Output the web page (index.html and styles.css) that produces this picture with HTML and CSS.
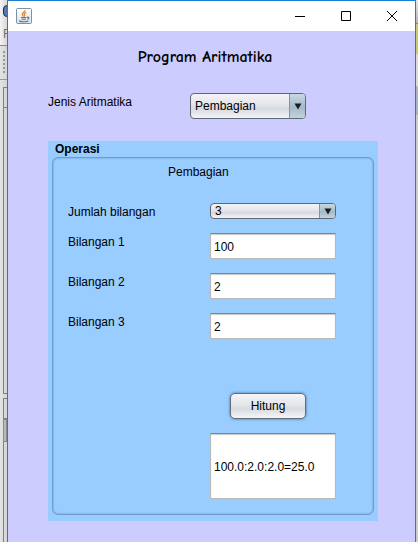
FILE: index.html
```html
<!DOCTYPE html>
<html lang="id">
<head>
<meta charset="utf-8">
<meta name="viewport" content="width=device-width, initial-scale=1">
<title>Program Aritmatika</title>
<link rel="stylesheet" href="styles.css">
</head>
<body>
<div class="desktop">
  <div class="behind behind-left" aria-hidden="true">
    <div class="strip-icon"><span class="ball"></span><span>F</span></div>
    <div class="strip-grip"><i></i><i></i><i></i><i></i><i></i><i></i></div>
    <div class="strip-head"></div>
    <div class="strip-body"></div>
    <div class="strip-head strip-second"></div>
    <div class="strip-thumb"></div>
    <div class="strip-rest"></div>
  </div>

  <div class="window">
    <header class="titlebar">
      <svg class="java" viewBox="0 0 16 16" width="16" height="16" aria-hidden="true">
        <defs><linearGradient id="tile" x1="0" y1="0" x2="0" y2="1"><stop offset="0" stop-color="#fff"/><stop offset="1" stop-color="#dce3e8"/></linearGradient></defs>
        <rect x=".5" y=".5" width="15" height="15" rx="1" fill="url(#tile)" stroke="#7893a5"/>
        <path d="M8.900 2C9.400 3.900 6 4.500 6.300 6.300C6.400 7.200 7.200 7.600 7.400 8.500M10.300 4.300C8.500 5 7.700 5.900 8.500 6.900C8.900 7.500 8.800 8 8.300 8.500" fill="none" stroke="#e8862e" stroke-width="1.300"/>
        <path d="M5 9.500H10.500M5.500 11.300H10M11 9.300C13.700 8.500 13.600 10.800 11.200 11.300M3.500 12.500C2.500 14 11.500 14.200 12.500 12.800" fill="none" stroke="#4d7690" stroke-width="1.100"/>
      </svg>
      <div class="controls">
        <button type="button" aria-label="Minimize"><svg viewBox="0 0 12 12" width="12" height="12"><path d="M1 6.500H11" /></svg></button>
        <button type="button" aria-label="Maximize"><svg viewBox="0 0 12 12" width="12" height="12"><path d="M1.500 1.500H10.500V10.500H1.500Z"/></svg></button>
        <button type="button" aria-label="Close"><svg viewBox="0 0 12 12" width="12" height="12"><path d="M1 1L11 11M11 1L1 11"/></svg></button>
      </div>
    </header>

    <main class="content">
      <h1>Program Aritmatika</h1>
      <div class="row kind">
        <label for="jenis">Jenis Aritmatika</label>
        <div class="combo">
          <select id="jenis"><option>Pembagian</option></select>
          <span class="arrow"><svg viewBox="0 0 8 7" width="8" height="7"><path d="M0.500 0.500H7.500L4 6.500Z"/></svg></span>
        </div>
      </div>

      <section class="panel">
        <h2>Operasi</h2>
        <form class="group">
          <p class="mode">Pembagian</p>
          <div class="row short">
            <label for="jumlah">Jumlah bilangan</label>
            <div class="combo">
              <select id="jumlah"><option>3</option></select>
              <span class="arrow"><svg viewBox="0 0 8 7" width="8" height="7"><path d="M0.500 0.500H7.500L4 6.500Z"/></svg></span>
            </div>
          </div>
          <div class="row"><label for="b1">Bilangan 1</label><input id="b1" type="text" value="100"></div>
          <div class="row"><label for="b2">Bilangan 2</label><input id="b2" type="text" value="2"></div>
          <div class="row"><label for="b3">Bilangan 3</label><input id="b3" type="text" value="2"></div>
          <div class="result">
            <button class="calc" type="button">Hitung</button>
            <input class="output" type="text" aria-label="Hasil" value="100.0:2.0:2.0=25.0">
          </div>
        </form>
      </section>
    </main>
  </div>

  <div class="behind behind-right" aria-hidden="true">
    <div class="edge-top"></div>
    <div class="edge-yellow"></div>
    <div class="edge-light"></div>
    <div class="edge-blue"></div>
    <div class="edge-rest"></div>
  </div>
</div>
</body>
</html>
```
FILE: styles.css
```css
* { box-sizing: border-box; }

body {
  margin: 0;
  font: 12px/18px "Liberation Sans", Arial, sans-serif;
  color: #000;
}

.desktop {
  display: grid;
  grid-template-columns: 7px 1fr 2px;
  min-height: 100vh;
}

/* Slivers of the application behind the window */
.behind {
  display: flex;
  flex-direction: column;
  overflow: hidden;
}
.behind-left { background: linear-gradient(90deg, #e4e4e4, #d4d4d4); }
.strip-icon {
  height: 46px;
  padding: 5px 0 0 3px;
  border-bottom: 1px solid #8c8c8c;
  background: linear-gradient(90deg, #f4f4f4, #d8d8d8);
  color: #6c7a55;
  line-height: 24px;
}
.strip-icon span { display: block; }
.ball {
  width: 12px;
  height: 12px;
  margin-bottom: 5px;
  border: 1px solid #1d2e5b;
  border-radius: 4px;
  background: #5878b4;
}
.strip-grip {
  display: flex;
  flex-direction: column;
  gap: 2px;
  height: 34px;
  padding: 5px 0 0 3px;
  border-bottom: 1px solid #999;
}
.strip-grip i { width: 2px; height: 2px; background: #999; }
.strip-head {
  height: 21px;
  margin: 7px 0 0 3px;
  border: solid #808080;
  border-width: 1px 0 1px 1px;
}
.strip-body {
  height: 286px;
  margin-left: 3px;
  border: solid #808080;
  border-width: 0 0 1px 1px;
}
.strip-second { margin-top: 4px; }
.strip-thumb {
  height: 23px;
  margin-left: 3px;
  border: 1px solid #8a8a8e;
  background: #b9b9bd;
}
.strip-rest { flex: 1; margin-left: 3px; border-left: 1px solid #808080; }

.behind-right { background: #c9cdcb; }
.edge-top { height: 24px; background: linear-gradient(#e8e8e8, #b5b5b5); border-bottom: 1px solid #888; }
.edge-yellow { height: 30px; background: #cfca6f; }
.edge-light { height: 33px; background: #dcd9d6; border-bottom: 1px solid #b5b5b5; }
.edge-blue { height: 28px; background: #aab4c6; }
.edge-rest { flex: 1; }

/* Window */
.window {
  display: flex;
  flex-direction: column;
  border: solid #1c80d2;
  border-width: 1px 1px 0;
  background: #ccccff;
}
.titlebar {
  display: flex;
  align-items: center;
  justify-content: space-between;
  height: 30px;
  padding-left: 8px;
  background: #fff;
}
.java { display: block; }
.controls { display: flex; }
.controls button {
  display: grid;
  place-items: center;
  width: 46px;
  height: 28px;
  padding: 0;
  border: 0;
  background: none;
}
.controls path { fill: none; stroke: #000; }

.content {
  flex: 1;
  padding: 16px 37px 20px 40px;
  border-bottom: 1px solid #d4d4d8;
}
h1 {
  margin: 0 16px 0 0;
  padding-bottom: 26px;
  font: bold 16px/20px "Comic Sans MS", "Comic Neue", "Noto Sans", sans-serif;
  text-align: center;
}
.row {
  display: grid;
  grid-template: 100% / 142px 1fr;
  align-items: start;
  height: 26px;
  margin-bottom: 14px;
}
.kind { margin: 0 72px 22px 0; }

/* Combo boxes */
.combo { position: relative; height: 100%; }
select {
  appearance: none;
  display: block;
  width: 100%;
  height: 100%;
  min-height: 0;
  padding: 0 20px 0 4px;
  border: 1px solid #5f6976;
  border-radius: 4px;
  background: linear-gradient(#f4f4f7, #e3e4e8 48%, #d6d9df 60%, #f3f4f7);
  color: #000;
  font: inherit;
}
.short select { line-height: 14px; }
.arrow {
  position: absolute;
  inset: 1px 1px 1px auto;
  display: grid;
  place-items: center;
  width: 16px;
  border-left: 1px solid #7f93a2;
  border-radius: 0 3px 3px 0;
  background: linear-gradient(#c7d8e2, #a4bac9 55%, #c1d4df);
  pointer-events: none;
}
.arrow path { fill: #1c1c1c; }

/* Operation panel */
.panel { padding: 0 4px 6px; background: #99ccff; }
h2 {
  margin: 0;
  padding-left: 3px;
  font-size: 12px;
  line-height: 16px;
}
.group {
  padding: 5px 37px 15px 15px;
  border: 1px solid #6e9bc9;
  border-radius: 6px;
  box-shadow: inset 0 0 2px #6690bd;
}
.mode { margin: 0 0 22px; padding-left: 100px; }
.short { height: 16px; }
.group input {
  width: 100%;
  height: 26px;
  padding: 1px 3px 0;
  border: 1px solid #b8b8b8;
  border-top-color: #828488;
  border-radius: 0;
  background: #fff;
  box-shadow: inset 0 1px 1px #c8c8c8;
  color: #000;
  font: inherit;
}
.result {
  display: flex;
  flex-direction: column;
  align-items: center;
  gap: 14px;
  margin: 54px 0 0 142px;
}
.calc {
  width: 76px;
  height: 26px;
  margin-right: 10px;
  padding: 0;
  border: 1px solid #666c78;
  border-radius: 5px;
  background: linear-gradient(#f5f5f8, #e4e5e9 48%, #d7dae0 62%, #f5f6f9);
  box-shadow: 0 0 2px 1px #6fa0cf;
  color: #000;
  font: inherit;
}
.group .output { height: 66px; }
```
